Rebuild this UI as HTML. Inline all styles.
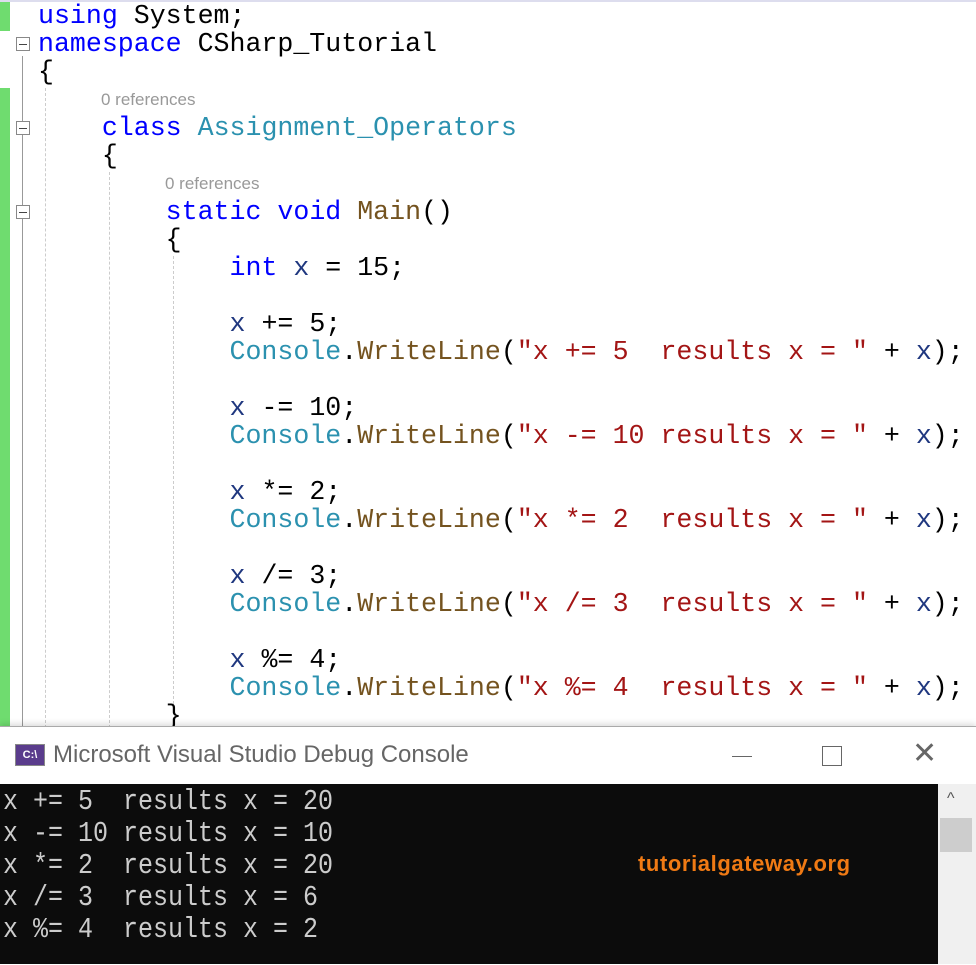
<!DOCTYPE html>
<html><head><meta charset="utf-8"><style>
body{margin:0;width:976px;height:964px;background:#fff;position:relative;overflow:hidden;font-family:"Liberation Mono",monospace}
.l{position:absolute;left:38px;height:28px;line-height:28px;font-size:26.6px;white-space:pre;color:#000}
.k{color:#0000ff}.t{color:#2b91af}.m{color:#74531f}.s{color:#a31515}.v{color:#1f377f}
.r{position:absolute;font-family:"Liberation Sans",sans-serif;font-size:17px;color:#999;height:28px;line-height:28px}
.g{position:absolute;left:0;width:10px;background:#6fdc6f}
.box{position:absolute;left:16px;width:14px;height:14px;border:1px solid #888;box-sizing:border-box;background:#fff}
.box:after{content:"";position:absolute;left:2px;right:2px;top:6px;height:1px;background:#444}
.dl{position:absolute;width:0;border-left:1px dashed #ccc}
.c{position:absolute;left:3px;font-family:"Liberation Mono",monospace;font-size:25px;color:#ccc;white-space:pre;height:32px;line-height:32px;transform:scaleY(1.15);transform-origin:0 50%}
</style></head><body>
<div class="g" style="top:0;height:31px"></div>
<div class="g" style="top:88px;height:640px"></div>
<div style="position:absolute;left:22px;top:56px;width:1px;height:672px;background:#999"></div>
<div class="dl" style="left:45px;top:88px;height:640px"></div>
<div class="dl" style="left:109px;top:172px;height:556px"></div>
<div class="dl" style="left:173px;top:256px;height:448px"></div>
<div class="box" style="top:37px"></div>
<div class="box" style="top:121px"></div>
<div class="box" style="top:205px"></div>
<div style="position:absolute;left:0;top:0;width:976px;height:2px;background:#dde"></div>

<div class="l" style="top:2px"><span class="k">using</span> System;</div>
<div class="l" style="top:30px"><span class="k">namespace</span> CSharp_Tutorial</div>
<div class="l" style="top:58px">{</div>
<div class="r" style="top:86px;left:101px">0 references</div>
<div class="l" style="top:114px">    <span class="k">class</span> <span class="t">Assignment_Operators</span></div>
<div class="l" style="top:142px">    {</div>
<div class="r" style="top:170px;left:165px">0 references</div>
<div class="l" style="top:198px">        <span class="k">static</span> <span class="k">void</span> <span class="m">Main</span>()</div>
<div class="l" style="top:226px">        {</div>
<div class="l" style="top:254px">            <span class="k">int</span> <span class="v">x</span> = 15;</div>
<div class="l" style="top:310px">            <span class="v">x</span> += 5;</div>
<div class="l" style="top:338px">            <span class="t">Console</span>.<span class="m">WriteLine</span>(<span class="s">"x += 5  results x = "</span> + <span class="v">x</span>);</div>
<div class="l" style="top:394px">            <span class="v">x</span> -= 10;</div>
<div class="l" style="top:422px">            <span class="t">Console</span>.<span class="m">WriteLine</span>(<span class="s">"x -= 10 results x = "</span> + <span class="v">x</span>);</div>
<div class="l" style="top:478px">            <span class="v">x</span> *= 2;</div>
<div class="l" style="top:506px">            <span class="t">Console</span>.<span class="m">WriteLine</span>(<span class="s">"x *= 2  results x = "</span> + <span class="v">x</span>);</div>
<div class="l" style="top:562px">            <span class="v">x</span> /= 3;</div>
<div class="l" style="top:590px">            <span class="t">Console</span>.<span class="m">WriteLine</span>(<span class="s">"x /= 3  results x = "</span> + <span class="v">x</span>);</div>
<div class="l" style="top:646px">            <span class="v">x</span> %= 4;</div>
<div class="l" style="top:674px">            <span class="t">Console</span>.<span class="m">WriteLine</span>(<span class="s">"x %= 4  results x = "</span> + <span class="v">x</span>);</div>
<div class="l" style="top:702px">        }</div>

<div style="position:absolute;left:0;top:726px;width:976px;height:238px;background:#fff;border-top:1px solid #aaa;box-shadow:0 -2px 6px rgba(0,0,0,.15)"></div>
<div style="position:absolute;left:15px;top:744px;width:30px;height:22px;background:#5a3c8c;border:1px solid #888;box-sizing:border-box;color:#fff;font:bold 11px 'Liberation Sans',sans-serif;line-height:20px;text-align:center">C:\</div>
<div style="position:absolute;left:53px;top:741px;font:24px 'Liberation Sans Narrow','Liberation Sans',sans-serif;color:#666">Microsoft Visual Studio Debug Console</div>
<div style="position:absolute;left:732px;top:756px;width:20px;height:1px;background:#666"></div>
<div style="position:absolute;left:822px;top:746px;width:20px;height:20px;border:1px solid #666;box-sizing:border-box"></div>
<div style="position:absolute;left:912px;top:736px;font:30px 'Liberation Sans',sans-serif;color:#666">✕</div>
<div style="position:absolute;left:0;top:784px;width:938px;height:180px;background:#0c0c0c"></div>
<div style="position:absolute;left:938px;top:784px;width:38px;height:180px;background:#f0f0f0"></div>
<div style="position:absolute;left:940px;top:818px;width:32px;height:34px;background:#cdcdcd"></div>
<div style="position:absolute;left:947px;top:790px;font:16px 'Liberation Sans',sans-serif;color:#555">^</div>
<div class="c" style="top:786px">x += 5  results x = 20</div>
<div class="c" style="top:818px">x -= 10 results x = 10</div>
<div class="c" style="top:850px">x *= 2  results x = 20</div>
<div class="c" style="top:882px">x /= 3  results x = 6</div>
<div class="c" style="top:914px">x %= 4  results x = 2</div>
<div style="position:absolute;left:638px;top:851px;font:bold 22px 'Liberation Sans',sans-serif;letter-spacing:0.6px;color:#f07a14">tutorialgateway.org</div>
</body></html>
